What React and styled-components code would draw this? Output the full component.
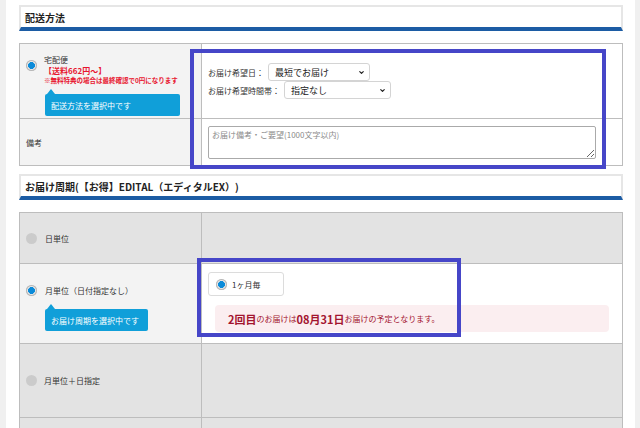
import styled, { createGlobalStyle } from "styled-components";
import { ChevronDown } from "lucide-react";

const GlobalStyle = createGlobalStyle`
  *, *::before, *::after { box-sizing: border-box; }
  body {
    margin: 0;
    background: #f0f0f0;
    font-family: "Noto Sans CJK JP", "Noto Sans", sans-serif;
    color: #333;
    text-spacing-trim: space-all;
  }
`;

const Page = styled.div`
  position: relative;
  margin: 0 5px 0 6px;
  height: 428px;
  overflow: hidden;
  background: #fff;
  padding: 5px 12px 0 13px;
`;

const SectionHeader = styled.h2`
  margin: ${(p) => p.$top || 0}px 0 12px;
  height: 26px;
  display: flex;
  align-items: center;
  padding-left: 4px;
  border: 2px solid #e6e6e6;
  border-bottom: 4px solid #1c5ca4;
  font-size: 10px;
  font-weight: 700;
  color: #222;
`;

const Table = styled.div`
  border: 1px solid #bdbdbd;
`;

const Row = styled.div`
  display: grid;
  grid-template-columns: 182px 1fr;
  height: ${(p) => p.$h}px;
  & + & {
    border-top: 1px solid #bdbdbd;
  }
`;

const LabelCell = styled.div`
  display: flex;
  flex-direction: column;
  justify-content: ${(p) => (p.$pt != null ? "flex-start" : "center")};
  padding: ${(p) => p.$pt || 0}px 6px 0;
  background: ${(p) => (p.$disabled ? "#e3e3e3" : "#f3f3f3")};
  border-right: 1px solid #bdbdbd;
  font-size: 8px;
  color: #333;
`;

const ValueCell = styled.div`
  display: flex;
  flex-direction: column;
  justify-content: ${(p) => (p.$top ? "flex-start" : "center")};
  padding: ${(p) => (p.$top ? "8px 13px 0 6px" : "0 6px")};
  background: ${(p) => (p.$disabled ? "#e3e3e3" : "#fff")};
`;

const Option = styled.label`
  display: flex;
  align-items: ${(p) => (p.$top ? "flex-start" : "center")};
  gap: ${(p) => p.$gap || 8}px;
  line-height: 11px;
`;

const Radio = styled.input.attrs({ type: "radio", readOnly: true })`
  appearance: none;
  margin: ${(p) => p.$mt || 0}px 0 0;
  width: 11px;
  height: 11px;
  flex: none;
  border-radius: 50%;
  background: ${(p) =>
    p.checked
      ? "radial-gradient(circle, #0b8bd9 0 3.2px, #e8e8e8 3.7px 4.3px, #cfcfcf 4.7px)"
      : "#cbcbcb"};
  box-shadow: ${(p) => (p.checked ? "inset 0 0 0 1px #b8b8b8" : "none")};
`;

const OptionText = styled.div`
  display: flex;
  flex-direction: column;
`;

const Line = styled.span`
  font-size: ${(p) => p.$size || 8}px;
  line-height: ${(p) => p.$lh || 11}px;
  font-weight: ${(p) => (p.$bold ? 700 : 400)};
  color: ${(p) => p.$color || "#333"};
  white-space: nowrap;
`;

const Bubble = styled.div`
  position: relative;
  margin: ${(p) => p.$mt}px 0 0 19px;
  width: ${(p) => p.$w}px;
  height: 22px;
  display: flex;
  align-items: center;
  padding-left: 6px;
  background: #109fd9;
  border-radius: 2px;
  color: #fff;
  font-size: 8px;
  white-space: nowrap;
  &::before {
    content: "";
    position: absolute;
    left: 2px;
    top: -5px;
    border-left: 4px solid transparent;
    border-right: 4px solid transparent;
    border-bottom: 5px solid #109fd9;
  }
`;

const FieldLine = styled.div`
  display: flex;
  align-items: center;
  font-size: 8px;
  color: #333;
`;

const SelectWrap = styled.span`
  position: relative;
  display: inline-flex;
  margin-left: 4px;
  svg {
    position: absolute;
    right: 5px;
    top: 6px;
    pointer-events: none;
  }
`;

const Select = styled.select`
  appearance: none;
  width: ${(p) => p.$w}px;
  height: 18px;
  padding: 0 0 0 6px;
  border: 1px solid #d4d4d4;
  border-radius: 3px;
  background: #fff;
  font-family: inherit;
  font-size: 9px;
  color: #222;
`;

const Note = styled.textarea`
  width: 388px;
  height: 33px;
  padding: 2px 3px;
  border: 1px solid #aaa;
  border-radius: 2px;
  font-family: inherit;
  font-size: 8px;
  color: #333;
  &::placeholder {
    color: #8a8a8a;
  }
`;

const Pill = styled.label`
  display: flex;
  align-items: center;
  gap: 5px;
  width: 76px;
  height: 24px;
  padding-left: 7px;
  border: 1px solid #dcdcdc;
  border-radius: 3px;
  font-size: 8px;
  color: #333;
`;

const Notice = styled.div`
  margin: 9px 0 0 7px;
  height: 27px;
  display: flex;
  align-items: center;
  padding-left: 13px;
  background: #fbeef0;
  border-radius: 4px;
  color: #a3142f;
  font-size: 8px;
  b {
    font-size: 11px;
    font-weight: 700;
  }
`;

const Highlight = styled.div`
  position: absolute;
  left: ${(p) => p.$x}px;
  top: ${(p) => p.$y}px;
  width: ${(p) => p.$w}px;
  height: ${(p) => p.$h}px;
  border: 4px solid #4646c8;
  pointer-events: none;
`;

export default function App() {
  return (
    <Page>
      <GlobalStyle />

      <SectionHeader>配送方法</SectionHeader>
      <Table>
        <Row $h={74}>
          <LabelCell $pt={10}>
            <Option $top $gap={7}>
              <Radio checked $mt={6} name="delivery" />
              <OptionText>
                <Line>宅配便</Line>
                <Line $bold $color="#e8152f">【送料662円〜】</Line>
                <Line $size={6.5} $lh={8} $bold $color="#e8152f">
                  ※無料特典の場合は最終確認で0円になります
                </Line>
              </OptionText>
            </Option>
            <Bubble $mt={10} $w={135}>配送方法を選択中です</Bubble>
          </LabelCell>
          <ValueCell>
            <FieldLine>
              お届け希望日：
              <SelectWrap>
                <Select $w={102} defaultValue="fast">
                  <option value="fast">最短でお届け</option>
                </Select>
                <ChevronDown size={7} strokeWidth={4} color="#222" />
              </SelectWrap>
            </FieldLine>
            <FieldLine>
              お届け希望時間帯：
              <SelectWrap>
                <Select $w={107} defaultValue="none">
                  <option value="none">指定なし</option>
                </Select>
                <ChevronDown size={7} strokeWidth={4} color="#222" />
              </SelectWrap>
            </FieldLine>
          </ValueCell>
        </Row>
        <Row $h={47}>
          <LabelCell>備考</LabelCell>
          <ValueCell>
            <Note placeholder="お届け備考・ご要望(1000文字以内)" />
          </ValueCell>
        </Row>
      </Table>

      <SectionHeader $top={8}>お届け周期(【お得】EDITAL（エディタルEX）)</SectionHeader>
      <Table>
        <Row $h={50}>
          <LabelCell $disabled>
            <Option>
              <Radio name="cycle" />
              日単位
            </Option>
          </LabelCell>
          <ValueCell $disabled />
        </Row>
        <Row $h={80}>
          <LabelCell $pt={21}>
            <Option>
              <Radio checked name="cycle" />
              月単位（日付指定なし）
            </Option>
            <Bubble $mt={13} $w={103}>お届け周期を選択中です</Bubble>
          </LabelCell>
          <ValueCell $top>
            <Pill>
              <Radio checked name="month" />
              1ヶ月毎
            </Pill>
            <Notice>
              <b>2回目</b>のお届けは<b>08月31日</b>お届けの予定となります。
            </Notice>
          </ValueCell>
        </Row>
        <Row $h={74}>
          <LabelCell $disabled>
            <Option $gap={7}>
              <Radio name="cycle" />
              月単位＋日指定
            </Option>
          </LabelCell>
          <ValueCell $disabled />
        </Row>
        <Row $h={60}>
          <LabelCell $disabled />
          <ValueCell $disabled />
        </Row>
      </Table>

      <Highlight $x={184} $y={49} $w={416} $h={120} />
      <Highlight $x={191} $y={258} $w={264} $h={79} />
    </Page>
  );
}
